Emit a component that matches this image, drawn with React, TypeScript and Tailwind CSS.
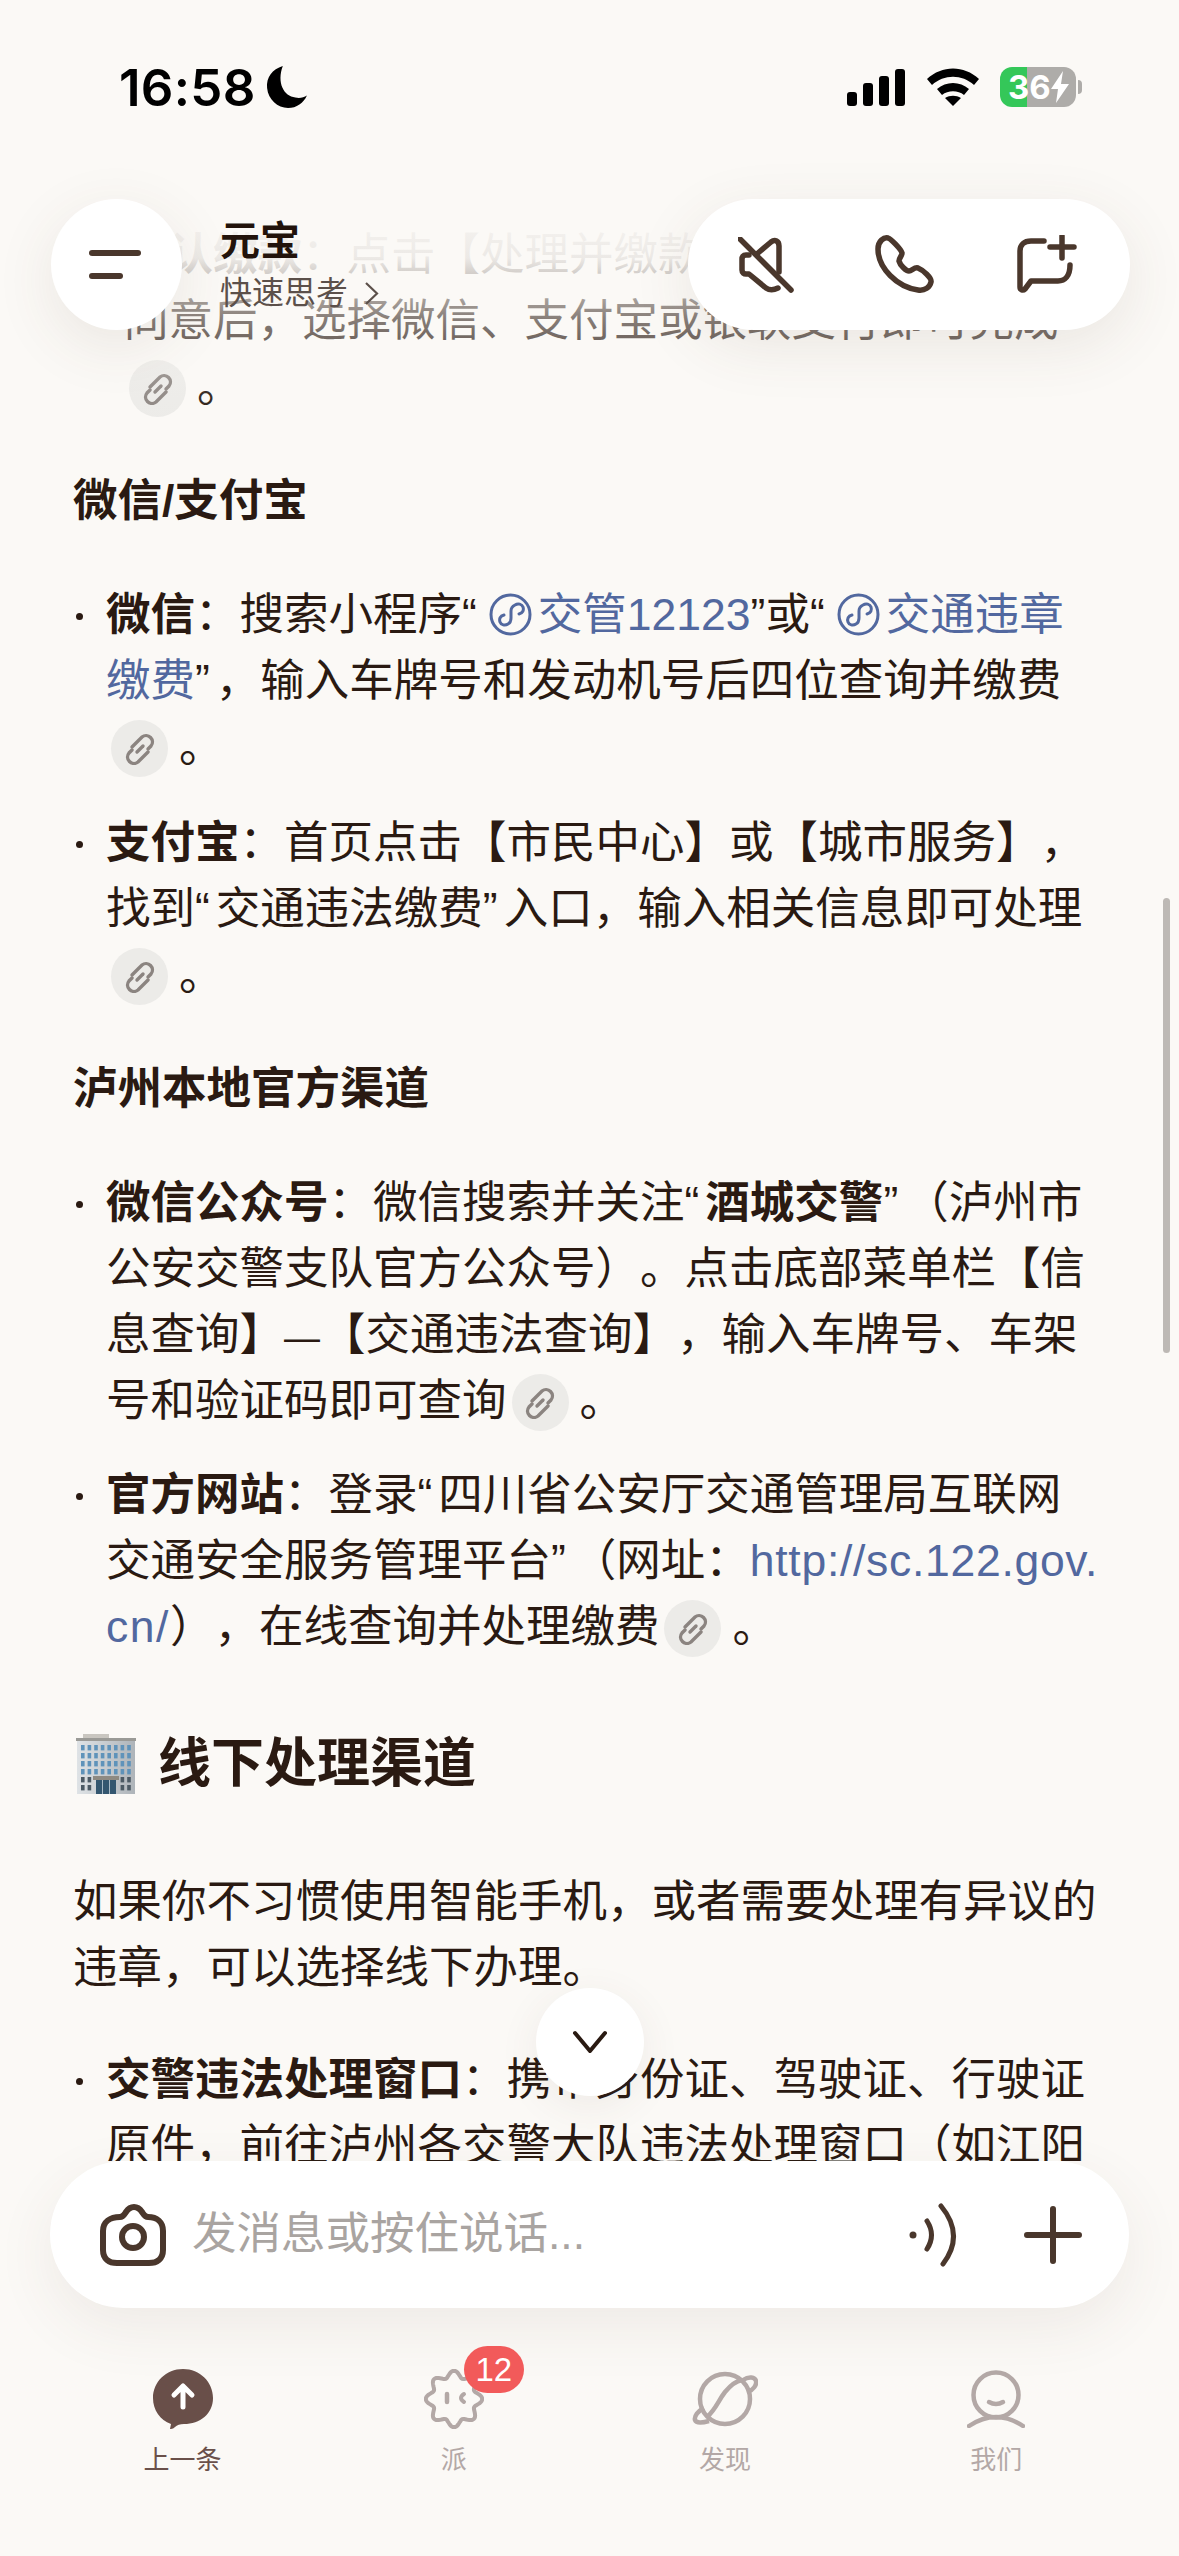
import React from 'react'

const FONT = "font-['Liberation_Sans','Noto_Sans_CJK_SC',sans-serif]"
const ICON = '#4a372c'
const TAB = '#b3a8a6'

// scalloped outline of the 派 tab icon
const flowerPath = (() => {
  const pts: string[] = []
  for (let i = 0; i <= 160; i++) {
    const t = (i / 160) * Math.PI * 2
    const r = 25 + 3.2 * Math.cos(8 * t)
    pts.push(`${(30 + r * Math.cos(t)).toFixed(1)} ${(30 + r * Math.sin(t)).toFixed(1)}`)
  }
  return `M${pts.join('L')}Z`
})()

const Chip = () => (
  <span className="ml-[5px] mr-[11px] -mt-[12px] -mb-[8px] inline-flex h-[57px] w-[57px] items-center justify-center rounded-full bg-[#ecebe8] align-middle">
    <svg width="32" height="34" viewBox="0 0 32 34" fill="none" stroke="#8b8480" strokeWidth="3.4" strokeLinecap="round">
      <path d="M8 16 18 6a6.4 6.4 0 0 1 9 9l-3 3" />
      <path d="M8 19l-3 3a6.4 6.4 0 0 0 9 9l10-10" />
      <path d="M13 21l6-6" />
    </svg>
  </span>
)

const MiniIcon = () => (
  <svg width="43" height="43" viewBox="0 0 43 43" fill="none" stroke="#52689f" strokeWidth="3" strokeLinecap="round" className="mx-[6px] inline-block align-[-6px]">
    <circle cx="21.5" cy="21.5" r="19.5" />
    <path d="M15 22c-4 1-5 4-4 7 1 3 5 4 8 2 2-1 3-4 3-6v-7c0-3 2-5 4-6 3-2 7-1 8 2 1 3 0 6-4 7" />
  </svg>
)

const Bold = ({ children }: { children: React.ReactNode }) => <span className="font-semibold">{children}</span>
const Blue = ({ children }: { children: React.ReactNode }) => <span className="text-[#52689f]">{children}</span>
// curly quotes sit wider in the reference than in the Latin face
const Q = ({ children }: { children: React.ReactNode }) => <span className="tracking-[6px]">{children}</span>

const Item = ({ className, children }: { className?: string; children: React.ReactNode }) => (
  <li className={`flex ${className ?? ''}`}>
    <span className="w-[33px] shrink-0 pl-[3px] pt-[31px]">
      <span className="block h-[7px] w-[7px] rounded-full bg-[#2a1a12]" />
    </span>
    <div>{children}</div>
  </li>
)

const SectionTitle = ({ className, children }: { className?: string; children: React.ReactNode }) => (
  <h3 className={`font-semibold ${className ?? ''}`}>{children}</h3>
)

const Building = () => (
  <svg width="60" height="60" viewBox="0 0 60 60" className="shrink-0">
    <defs>
      <linearGradient id="bld" x1="0" x2="1">
        <stop offset="0" stopColor="#dfe3e6" />
        <stop offset="1" stopColor="#aeb4b9" />
      </linearGradient>
    </defs>
    <rect x="7" y="0" width="26" height="5" fill="#c9c6c0" />
    <rect x="0" y="4" width="60" height="3" fill="#9a9a96" />
    <rect x="1" y="7" width="58" height="53" fill="url(#bld)" />
    {[0, 1, 2, 3].map((r) =>
      [0, 1, 2, 3, 4, 5, 6, 7].map((c) => (
        <rect key={`${r}-${c}`} x={5 + c * 6.6} y={11 + r * 8} width="3.6" height="5.4" fill="#5f93ba" />
      ))
    )}
    {[0, 1].map((r) =>
      [0, 1, 6, 7].map((c) => (
        <rect key={`${r}-${c}`} x={5 + c * 6.6} y={43 + r * 8} width="3.6" height="5.4" fill="#4c5a64" />
      ))
    )}
    <rect x="17" y="42" width="26" height="4" fill="#8e8a82" />
    <rect x="20" y="46" width="20" height="14" fill="#33566f" />
    <path d="M26.5 46v14M33.5 46v14" stroke="#a9bac6" strokeWidth="1" />
  </svg>
)

const StatusBar = () => (
  <div className="absolute inset-x-0 top-[62px] flex h-[50px] items-center justify-between pl-[119px] pr-[97px]">
    <div className="flex items-center gap-[9px]">
      <span className="font-['Inter',sans-serif] text-[51px] font-semibold leading-none tracking-[0.3px] text-black">16:58</span>
      <svg width="44" height="44" viewBox="0 0 40 42">
        <path d="M16 1C6 4 0 12 1 22c1 11 10 19 20 19 8 0 15-5 18-12-3 2-7 3-11 2C17 30 10 17 16 1Z" fill="#000" />
      </svg>
    </div>
    <div className="flex items-center">
      <div className="flex h-[38px] items-end gap-[6px]">
        <span className="h-[14px] w-[10px] rounded-[3px] bg-black" />
        <span className="h-[23px] w-[10px] rounded-[3px] bg-black" />
        <span className="h-[30px] w-[10px] rounded-[3px] bg-black" />
        <span className="h-[37px] w-[10px] rounded-[3px] bg-black" />
      </div>
      <svg width="52" height="38" viewBox="0 0 52 38" className="ml-[22px]">
        <path d="M0 11C15-3 37-3 52 11l-5 6C35 6 17 6 5 17Z M10 21c9-8 23-8 32 0l-5 6c-6-5-16-5-22 0Z M18 30c5-3 11-3 16 0l-8 8Z" fill="#000" />
      </svg>
      <div className="ml-[21px] flex h-[40px] w-[76px] items-center rounded-[12px] bg-[linear-gradient(90deg,#34c759_36%,#aeaca9_36%)] pl-[8px] font-['Inter',sans-serif] text-[33px] font-bold leading-none text-white">
        36
        <svg width="20" height="32" viewBox="0 0 20 32" className="-ml-[1px]">
          <path d="M13 0 1 18h7l-2 14 13-19h-8Z" fill="#fff" />
        </svg>
      </div>
      <span className="ml-[2px] h-[14px] w-[4px] rounded-r-full bg-[#aeaca9]" />
    </div>
  </div>
)

const Header = () => (
  <div className="absolute left-[51px] right-[49px] top-[199px] flex items-start">
    <button className="flex h-[131px] w-[131px] flex-col items-start justify-center gap-[17px] rounded-full bg-white pl-[38px] shadow-[0_16px_60px_rgba(90,70,50,0.1)]">
      <span className="h-[6px] w-[52px] rounded-full bg-[#4a372c]" />
      <span className="h-[6px] w-[34px] rounded-full bg-[#4a372c]" />
    </button>
    <div className={`ml-[38px] flex flex-col ${FONT}`}>
      <span className="mt-[20px] text-[40px] font-bold leading-[44px] text-[#22130b]">元宝</span>
      <span className="mt-[11px] flex items-center text-[32px] leading-[38px] text-[#5c504a]">
        快速思考
        <svg width="14" height="23" viewBox="0 0 14 23" fill="none" stroke="#5c504a" strokeWidth="2.2" className="ml-[17px]">
          <path d="M1 1l11 10.500L1 22" />
        </svg>
      </span>
    </div>
    <div className="ml-auto flex h-[131px] w-[442px] items-center rounded-full bg-white pl-[50px] shadow-[0_16px_60px_rgba(90,70,50,0.1)]">
      <svg width="56" height="56" viewBox="0 0 56 56" fill="none" stroke={ICON} strokeWidth="5.5" strokeLinecap="round" strokeLinejoin="round">
        <path d="M20 16 33 5c4-3 8-1 8 4v26" />
        <path d="M11 18H8c-3 0-4 2-4 4v11c0 3 2 4 4 4h3l17 14c3 2 8 2 12 0" />
        <path d="M2 2l51 51" />
      </svg>
      <svg width="60" height="60" viewBox="0 0 60 60" fill="none" stroke={ICON} strokeWidth="5.5" strokeLinejoin="round" className="ml-[81px]">
        <path d="M3 14C3 6 9 2 13 3c3 1 13 11 14 15 0 3-3 5-3 8 1 4 7 10 10 10 3 0 5-4 9-3 5 2 14 10 13 14-1 5-6 9-13 8C22 52 3 33 3 14Z" />
      </svg>
      <svg width="60" height="60" viewBox="0 0 60 60" fill="none" stroke={ICON} strokeWidth="5.5" strokeLinecap="round" strokeLinejoin="round" className="ml-[82px]">
        <path d="M27 6H14C7 6 3 10 3 16v36c0 3 3 4 5 2l6-8h27c7 0 12-5 12-16" />
        <path d="M33 12h24M45 1v22" />
      </svg>
    </div>
  </div>
)

const TabItem = ({ label, active, children }: { label: string; active?: boolean; children: React.ReactNode }) => (
  <div className="flex flex-col items-center">
    <div className="relative flex h-[60px] w-[66px] items-center justify-center">{children}</div>
    <span className={`mt-[15px] text-[26px] leading-[32px] ${active ? 'text-[#6a504a]' : 'text-[#b3a8a6]'}`}>{label}</span>
  </div>
)

const BottomPanel = () => (
  <div className={`absolute inset-x-0 bottom-0 top-[2161px] bg-[#fbf9f6] ${FONT}`}>
    <div className="mx-[50px] flex h-[147px] items-center rounded-[74px] bg-white pl-[50px] pr-[47px] shadow-[0_20px_60px_rgba(90,70,50,0.08)]">
      <svg width="66" height="62" viewBox="0 0 66 62" fill="none" stroke={ICON} strokeWidth="6" strokeLinejoin="round">
        <path d="M20 13c3 0 4-2 6-5 2-3 4-5 8-5s6 2 8 5c2 3 3 5 6 5 9 0 15 5 15 14v19c0 9-6 13-14 13H17C9 59 3 55 3 46V27c0-9 7-14 17-14Z" />
        <circle cx="33" cy="33" r="11" />
      </svg>
      <span className="ml-[26px] text-[44.5px] leading-none text-[#a9a4a1]">发消息或按住说话...</span>
      <svg width="50" height="64" viewBox="0 0 50 64" fill="none" stroke={ICON} strokeWidth="5" strokeLinecap="round" className="ml-auto">
        <circle cx="6" cy="32" r="3.5" fill={ICON} stroke="none" />
        <path d="M20 18q9 14 0 28" />
        <path d="M34 3q24 29 2 58" />
      </svg>
      <svg width="58" height="58" viewBox="0 0 58 58" stroke={ICON} strokeWidth="6" strokeLinecap="round" className="ml-[67px]">
        <path d="M3 29h52M29 3v52" />
      </svg>
    </div>
    <div className="mt-[61px] grid grid-cols-4 px-[47px]">
      <TabItem label="上一条" active>
        <svg width="60" height="60" viewBox="0 0 60 60">
          <path d="M30 0c17 0 30 13 30 29S47 55 31 55c-4 0-7 1-9 3-2 2-4 2-5 2l1-5C7 51 0 41 0 29 0 13 13 0 30 0Z" fill="#694f49" />
          <path d="M30 38V17M21 26l9-9 9 9" fill="none" stroke="#fff" strokeWidth="5" strokeLinecap="round" strokeLinejoin="round" />
        </svg>
      </TabItem>
      <TabItem label="派">
        <svg width="60" height="60" viewBox="0 0 60 60" fill="none" stroke={TAB} strokeWidth="4">
          <path d={flowerPath} />
          <path d="M23 25v8" strokeLinecap="round" strokeWidth="4.5" />
          <path d="M40 25q-6 4 0 8" strokeLinecap="round" />
        </svg>
        <span className="absolute -top-[23px] left-[43px] flex h-[47px] w-[60px] items-center justify-center rounded-full bg-[#f25a5a] text-[33px] leading-none text-white">12</span>
      </TabItem>
      <TabItem label="发现">
        <svg width="66" height="56" viewBox="0 0 66 56" fill="none" stroke={TAB} strokeWidth="4.5">
          <circle cx="33" cy="28" r="25" />
          <path d="M51 9c6-4 12-3 13 1 1 4-3 9-8 11" />
          <path d="M12 37c-6 3-10 8-9 12 1 3 7 3 14 1" />
          <path d="M15 46C24 38 26 30 33 21 38 15 44 10 50 9" />
        </svg>
      </TabItem>
      <TabItem label="我们">
        <svg width="58" height="58" viewBox="0 0 58 58" fill="none" stroke={TAB} strokeWidth="4.5" strokeLinecap="round">
          <circle cx="29" cy="25" r="22.5" />
          <path d="M22 32q7 4 14 0" />
          <path d="M2 56q27-18 54 0" />
        </svg>
      </TabItem>
    </div>
  </div>
)

export default function App() {
  return (
    <div className={`relative h-[2556px] w-[1179px] overflow-hidden bg-[#fbf9f6] text-[#2a1a12] ${FONT}`}>
      <div className="whitespace-nowrap pl-[73px] pt-[222px] text-[44.5px] leading-[66px] [text-spacing-trim:space-all]">
        <p className="pl-[51px]">
          <Bold>确认缴款</Bold>：点击【处理并缴款】，
          <br />
          同意后，选择微信、支付宝或银联支付即可完成
          <br />
          <Chip />。
        </p>

        <SectionTitle className="mt-[48px]">微信/支付宝</SectionTitle>
        <ul className="mt-[48px]">
          <Item>
            <Bold>微信</Bold>：搜索小程序<Q>“</Q><Blue><MiniIcon />交管12123</Blue>”或<Q>“</Q><Blue><MiniIcon />交通违章</Blue>
            <br />
            <Blue>缴费</Blue><Q>”</Q>，输入车牌号和发动机号后四位查询并缴费
            <br />
            <Chip />。
          </Item>
          <Item className="mt-[30px]">
            <Bold>支付宝</Bold>：首页点击【市民中心】或【城市服务】，
            <br />
            找到<Q>“</Q>交通违法缴费<Q>”</Q>入口，输入相关信息即可处理
            <br />
            <Chip />。
          </Item>
        </ul>

        <SectionTitle className="mt-[48px]">泸州本地官方渠道</SectionTitle>
        <ul className="mt-[48px]">
          <Item>
            <Bold>微信公众号</Bold>：微信搜索并关注<Q>“</Q><Bold>酒城交警</Bold><Q>”</Q>（泸州市
            <br />
            公安交警支队官方公众号）。点击底部菜单栏【信
            <br />
            息查询】<span className="text-[36px] leading-none tracking-[1px]">—</span>【交通违法查询】，输入车牌号、车架
            <br />
            号和验证码即可查询
            <Chip />。
          </Item>
          <Item className="mt-[28px]">
            <Bold>官方网站</Bold>：登录<Q>“</Q>四川省公安厅交通管理局互联网
            <br />
            交通安全服务管理平台<Q>”</Q>（网址：<span className="tracking-[0.7px]"><Blue>http://sc.122.gov.</Blue></span>
            <br />
            <span className="tracking-[1.5px]"><Blue>cn/</Blue></span>），在线查询并处理缴费
            <Chip />。
          </Item>
        </ul>

        <h2 className="mt-[66px] flex h-[76px] items-center gap-[22px] pl-[3px] text-[53px] font-semibold">
          <Building />
          线下处理渠道
        </h2>

        <p className="mt-[67px]">
          如果你不习惯使用智能手机，或者需要处理有异议的
          <br />
          违章，可以选择线下办理。
        </p>

        <ul className="mt-[46px]">
          <Item>
            <Bold>交警违法处理窗口</Bold>：携带身份证、驾驶证、行驶证
            <br />
            原件，前往泸州各交警大队违法处理窗口（如江阳
          </Item>
        </ul>
      </div>

      {/* fade under the floating header */}
      <div className="absolute inset-x-0 top-0 h-[430px] bg-[linear-gradient(180deg,#fbf9f6_0%,#fbf9f6_46%,rgba(251,249,246,0.93)_60%,rgba(251,249,246,0.45)_74%,rgba(251,249,246,0.1)_90%,rgba(251,249,246,0)_100%)]" />

      <StatusBar />
      <Header />

      <div className="absolute right-[9px] top-[898px] h-[455px] w-[7px] rounded-full bg-[#bdb9b5]" />

      <button className="absolute left-[536px] top-[1988px] flex h-[108px] w-[108px] items-center justify-center rounded-full bg-white shadow-[0_10px_40px_rgba(90,70,50,0.08)]">
        <svg width="36" height="24" viewBox="0 0 36 24" fill="none" stroke="#2a1a12" strokeWidth="4" strokeLinecap="round" strokeLinejoin="round">
          <path d="M3 3l15 18L33 3" />
        </svg>
      </button>

      <BottomPanel />
    </div>
  )
}
